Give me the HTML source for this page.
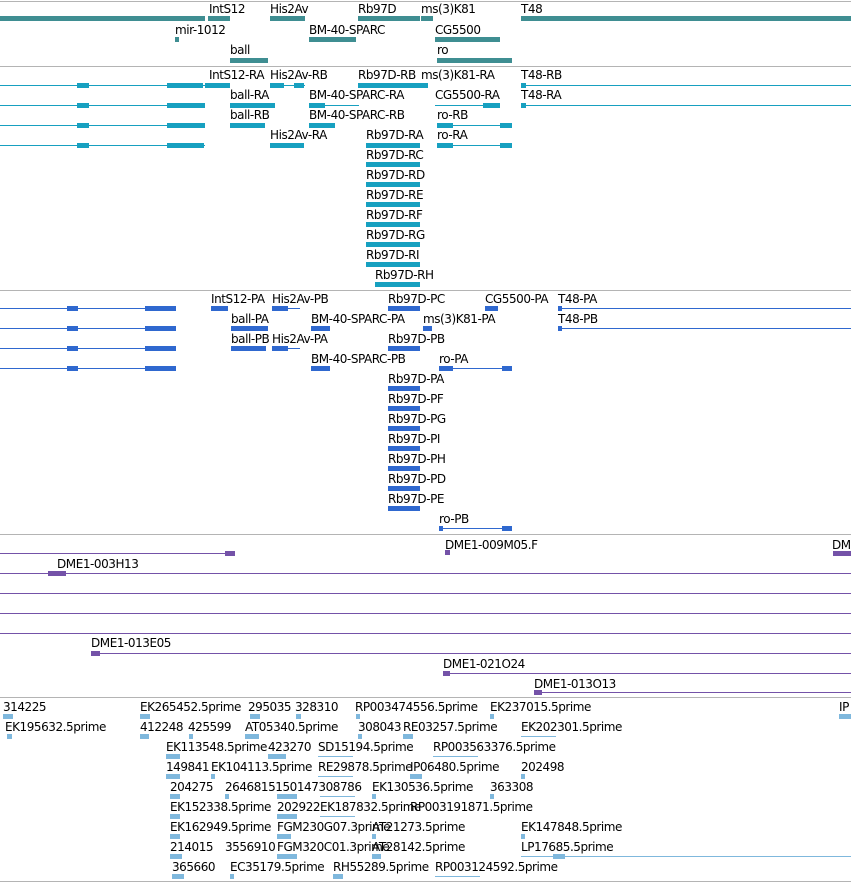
<!DOCTYPE html>
<html><head><meta charset="utf-8"><style>
body{margin:0;width:851px;height:882px;background:#fff;position:relative;overflow:hidden;font-family:"DejaVu Sans","Liberation Sans",sans-serif}
div{position:absolute}
.t{font-size:12px;letter-spacing:-0.45px;line-height:12px;margin-top:1px;color:#000;white-space:nowrap}
.s{left:0;width:851px;height:1px;background:#b4b4b4}
.g{background:#3f8e92;height:5px}
.c{background:#17a0c0}
.p{background:#2f68cf}
.u{background:#7452a8}
.q{background:#7fb8dd}
.h{height:1px}
.b{height:5px}
</style></head><body>
<div class="s" style="top:1px"></div>
<div class="s" style="top:66px"></div>
<div class="s" style="top:290px"></div>
<div class="s" style="top:534px"></div>
<div class="s" style="top:697px"></div>
<div class="s" style="top:881px"></div>

<!-- genes -->
<div class="t" style="left:209px;top:2px">IntS12</div>
<div class="t" style="left:270px;top:2px">His2Av</div>
<div class="t" style="left:358px;top:2px">Rb97D</div>
<div class="t" style="left:421px;top:2px">ms(3)K81</div>
<div class="t" style="left:521px;top:2px">T48</div>
<div class="g" style="left:0;width:205px;top:16px"></div>
<div class="g" style="left:208px;width:22px;top:16px"></div>
<div class="g" style="left:270px;width:35px;top:16px"></div>
<div class="g" style="left:358px;width:62px;top:16px"></div>
<div class="g" style="left:421px;width:12px;top:16px"></div>
<div class="g" style="left:521px;width:330px;top:16px"></div>
<div class="t" style="left:175px;top:23px">mir-1012</div>
<div class="t" style="left:309px;top:23px">BM-40-SPARC</div>
<div class="t" style="left:435px;top:23px">CG5500</div>
<div class="g" style="left:175px;width:4px;top:37px"></div>
<div class="g" style="left:309px;width:47px;top:37px"></div>
<div class="g" style="left:435px;width:65px;top:37px"></div>
<div class="t" style="left:230px;top:43px">ball</div>
<div class="t" style="left:437px;top:43px">ro</div>
<div class="g" style="left:230px;width:38px;top:58px"></div>
<div class="g" style="left:437px;width:75px;top:58px"></div>

<!-- transcripts -->
<div class="t" style="left:209px;top:68px">IntS12-RA</div>
<div class="t" style="left:270px;top:68px">His2Av-RB</div>
<div class="t" style="left:358px;top:68px">Rb97D-RB</div>
<div class="t" style="left:421px;top:68px">ms(3)K81-RA</div>
<div class="t" style="left:521px;top:68px">T48-RB</div>
<div class="c h" style="left:0;width:230px;top:85px"></div>
<div class="c b" style="left:77px;width:12px;top:83px"></div><div class="c b" style="left:167px;width:36px;top:83px"></div><div class="c b" style="left:205px;width:25px;top:83px"></div>
<div class="c h" style="left:270px;width:35px;top:85px"></div><div class="c b" style="left:270px;width:14px;top:83px"></div><div class="c b" style="left:294px;width:10px;top:83px"></div>
<div class="c b" style="left:358px;width:70px;top:83px"></div>
<div class="c h" style="left:521px;width:330px;top:85px"></div><div class="c b" style="left:521px;width:5px;top:83px"></div>

<div class="t" style="left:230px;top:88px">ball-RA</div>
<div class="t" style="left:309px;top:88px">BM-40-SPARC-RA</div>
<div class="t" style="left:435px;top:88px">CG5500-RA</div>
<div class="t" style="left:521px;top:88px">T48-RA</div>
<div class="c h" style="left:0;width:205px;top:105px"></div>
<div class="c b" style="left:77px;width:12px;top:103px"></div><div class="c b" style="left:167px;width:38px;top:103px"></div>
<div class="c b" style="left:230px;width:45px;top:103px"></div>
<div class="c h" style="left:309px;width:50px;top:105px"></div><div class="c b" style="left:309px;width:16px;top:103px"></div>
<div class="c h" style="left:435px;width:65px;top:105px"></div><div class="c b" style="left:483px;width:17px;top:103px"></div>
<div class="c h" style="left:521px;width:330px;top:105px"></div><div class="c b" style="left:521px;width:5px;top:103px"></div>

<div class="t" style="left:230px;top:108px">ball-RB</div>
<div class="t" style="left:309px;top:108px">BM-40-SPARC-RB</div>
<div class="t" style="left:437px;top:108px">ro-RB</div>
<div class="c h" style="left:0;width:205px;top:125px"></div>
<div class="c b" style="left:77px;width:12px;top:123px"></div><div class="c b" style="left:167px;width:38px;top:123px"></div>
<div class="c b" style="left:230px;width:35px;top:123px"></div>
<div class="c b" style="left:309px;width:26px;top:123px"></div>
<div class="c h" style="left:437px;width:75px;top:125px"></div><div class="c b" style="left:437px;width:16px;top:123px"></div><div class="c b" style="left:500px;width:12px;top:123px"></div>

<div class="t" style="left:270px;top:128px">His2Av-RA</div>
<div class="t" style="left:366px;top:128px">Rb97D-RA</div>
<div class="t" style="left:437px;top:128px">ro-RA</div>
<div class="c h" style="left:0;width:205px;top:145px"></div>
<div class="c b" style="left:77px;width:12px;top:143px"></div><div class="c b" style="left:167px;width:37px;top:143px"></div>
<div class="c b" style="left:270px;width:34px;top:143px"></div>
<div class="c b" style="left:366px;width:54px;top:143px"></div>
<div class="c h" style="left:437px;width:75px;top:145px"></div><div class="c b" style="left:437px;width:16px;top:143px"></div><div class="c b" style="left:500px;width:12px;top:143px"></div>

<div class="t" style="left:366px;top:148px">Rb97D-RC</div><div class="c b" style="left:366px;width:54px;top:162px"></div>
<div class="t" style="left:366px;top:168px">Rb97D-RD</div><div class="c b" style="left:366px;width:54px;top:182px"></div>
<div class="t" style="left:366px;top:188px">Rb97D-RE</div><div class="c b" style="left:366px;width:54px;top:202px"></div>
<div class="t" style="left:366px;top:208px">Rb97D-RF</div><div class="c b" style="left:366px;width:54px;top:222px"></div>
<div class="t" style="left:366px;top:228px">Rb97D-RG</div><div class="c b" style="left:366px;width:54px;top:242px"></div>
<div class="t" style="left:366px;top:248px">Rb97D-RI</div><div class="c b" style="left:366px;width:54px;top:262px"></div>
<div class="t" style="left:375px;top:268px">Rb97D-RH</div><div class="c b" style="left:375px;width:45px;top:282px"></div>

<!-- proteins -->
<div class="t" style="left:211px;top:292px">IntS12-PA</div>
<div class="t" style="left:272px;top:292px">His2Av-PB</div>
<div class="t" style="left:388px;top:292px">Rb97D-PC</div>
<div class="t" style="left:485px;top:292px">CG5500-PA</div>
<div class="t" style="left:558px;top:292px">T48-PA</div>
<div class="p h" style="left:0;width:176px;top:308px"></div>
<div class="p b" style="left:67px;width:11px;top:306px"></div><div class="p b" style="left:145px;width:31px;top:306px"></div>
<div class="p b" style="left:211px;width:17px;top:306px"></div>
<div class="p h" style="left:272px;width:28px;top:308px"></div><div class="p b" style="left:272px;width:16px;top:306px"></div>
<div class="p b" style="left:388px;width:32px;top:306px"></div>
<div class="p b" style="left:485px;width:13px;top:306px"></div>
<div class="p h" style="left:558px;width:293px;top:308px"></div><div class="p b" style="left:558px;width:4px;top:306px"></div>

<div class="t" style="left:231px;top:312px">ball-PA</div>
<div class="t" style="left:311px;top:312px">BM-40-SPARC-PA</div>
<div class="t" style="left:423px;top:312px">ms(3)K81-PA</div>
<div class="t" style="left:558px;top:312px">T48-PB</div>
<div class="p h" style="left:0;width:176px;top:328px"></div>
<div class="p b" style="left:67px;width:11px;top:326px"></div><div class="p b" style="left:145px;width:31px;top:326px"></div>
<div class="p b" style="left:231px;width:37px;top:326px"></div>
<div class="p b" style="left:311px;width:19px;top:326px"></div>
<div class="p b" style="left:423px;width:9px;top:326px"></div>
<div class="p h" style="left:558px;width:293px;top:328px"></div><div class="p b" style="left:558px;width:4px;top:326px"></div>

<div class="t" style="left:231px;top:332px">ball-PB</div>
<div class="t" style="left:272px;top:332px">His2Av-PA</div>
<div class="t" style="left:388px;top:332px">Rb97D-PB</div>
<div class="p h" style="left:0;width:176px;top:348px"></div>
<div class="p b" style="left:67px;width:11px;top:346px"></div><div class="p b" style="left:145px;width:31px;top:346px"></div>
<div class="p b" style="left:231px;width:35px;top:346px"></div>
<div class="p h" style="left:272px;width:28px;top:348px"></div><div class="p b" style="left:272px;width:16px;top:346px"></div>
<div class="p b" style="left:388px;width:32px;top:346px"></div>

<div class="t" style="left:311px;top:352px">BM-40-SPARC-PB</div>
<div class="t" style="left:439px;top:352px">ro-PA</div>
<div class="p h" style="left:0;width:176px;top:368px"></div>
<div class="p b" style="left:67px;width:11px;top:366px"></div><div class="p b" style="left:145px;width:31px;top:366px"></div>
<div class="p b" style="left:311px;width:19px;top:366px"></div>
<div class="p h" style="left:439px;width:73px;top:368px"></div><div class="p b" style="left:439px;width:14px;top:366px"></div><div class="p b" style="left:502px;width:10px;top:366px"></div>

<div class="t" style="left:388px;top:372px">Rb97D-PA</div><div class="p b" style="left:388px;width:32px;top:386px"></div>
<div class="t" style="left:388px;top:392px">Rb97D-PF</div><div class="p b" style="left:388px;width:32px;top:406px"></div>
<div class="t" style="left:388px;top:412px">Rb97D-PG</div><div class="p b" style="left:388px;width:32px;top:426px"></div>
<div class="t" style="left:388px;top:432px">Rb97D-PI</div><div class="p b" style="left:388px;width:32px;top:446px"></div>
<div class="t" style="left:388px;top:452px">Rb97D-PH</div><div class="p b" style="left:388px;width:32px;top:466px"></div>
<div class="t" style="left:388px;top:472px">Rb97D-PD</div><div class="p b" style="left:388px;width:32px;top:486px"></div>
<div class="t" style="left:388px;top:492px">Rb97D-PE</div><div class="p b" style="left:388px;width:32px;top:506px"></div>
<div class="t" style="left:439px;top:512px">ro-PB</div>
<div class="p h" style="left:439px;width:73px;top:528px"></div><div class="p b" style="left:439px;width:4px;top:526px"></div><div class="p b" style="left:502px;width:10px;top:526px"></div>

<!-- purple -->
<div class="t" style="left:445px;top:538px">DME1-009M05.F</div>
<div class="t" style="left:832px;top:538px">DM</div>
<div class="u h" style="left:0;width:235px;top:553px"></div><div class="u b" style="left:225px;width:10px;top:551px"></div>
<div class="u b" style="left:445px;width:5px;top:550px"></div>
<div class="u b" style="left:833px;width:18px;top:551px"></div>
<div class="t" style="left:57px;top:557px">DME1-003H13</div>
<div class="u h" style="left:0;width:851px;top:573px"></div><div class="u b" style="left:48px;width:18px;top:571px"></div>
<div class="u h" style="left:0;width:851px;top:593px"></div>
<div class="u h" style="left:0;width:851px;top:613px"></div>
<div class="u h" style="left:0;width:851px;top:633px"></div>
<div class="t" style="left:91px;top:636px">DME1-013E05</div>
<div class="u h" style="left:91px;width:760px;top:653px"></div><div class="u b" style="left:91px;width:9px;top:651px"></div>
<div class="t" style="left:443px;top:657px">DME1-021O24</div>
<div class="u h" style="left:443px;width:408px;top:673px"></div><div class="u b" style="left:443px;width:7px;top:671px"></div>
<div class="t" style="left:534px;top:677px">DME1-013O13</div>
<div class="u h" style="left:534px;width:317px;top:692px"></div><div class="u b" style="left:534px;width:8px;top:690px"></div>

<!-- ESTs -->
<div class="t" style="left:3px;top:700px">314225</div>
<div class="t" style="left:140px;top:700px">EK265452.5prime</div>
<div class="t" style="left:248px;top:700px">295035</div>
<div class="t" style="left:295px;top:700px">328310</div>
<div class="t" style="left:355px;top:700px">RP003474556.5prime</div>
<div class="t" style="left:490px;top:700px">EK237015.5prime</div>
<div class="t" style="left:839px;top:700px">IP</div>
<div class="q b" style="left:3px;width:10px;top:714px"></div><div class="q b" style="left:140px;width:10px;top:714px"></div><div class="q b" style="left:250px;width:10px;top:714px"></div><div class="q b" style="left:296px;width:5px;top:714px"></div><div class="q b" style="left:356px;width:4px;top:714px"></div><div class="q b" style="left:490px;width:4px;top:714px"></div><div class="q b" style="left:839px;width:12px;top:714px"></div>

<div class="t" style="left:5px;top:720px">EK195632.5prime</div>
<div class="t" style="left:140px;top:720px">412248</div>
<div class="t" style="left:188px;top:720px">425599</div>
<div class="t" style="left:245px;top:720px">AT05340.5prime</div>
<div class="t" style="left:358px;top:720px">308043</div>
<div class="t" style="left:403px;top:720px">RE03257.5prime</div>
<div class="t" style="left:521px;top:720px">EK202301.5prime</div>
<div class="q b" style="left:7px;width:5px;top:734px"></div><div class="q b" style="left:140px;width:9px;top:734px"></div><div class="q b" style="left:189px;width:4px;top:734px"></div><div class="q b" style="left:245px;width:14px;top:734px"></div><div class="q b" style="left:358px;width:4px;top:734px"></div><div class="q b" style="left:403px;width:10px;top:734px"></div><div class="q h" style="left:521px;width:35px;top:736px"></div>

<div class="t" style="left:166px;top:740px">EK113548.5prime</div>
<div class="t" style="left:268px;top:740px">423270</div>
<div class="t" style="left:318px;top:740px">SD15194.5prime</div>
<div class="t" style="left:433px;top:740px">RP003563376.5prime</div>
<div class="q b" style="left:166px;width:14px;top:754px"></div><div class="q b" style="left:268px;width:18px;top:754px"></div><div class="q h" style="left:318px;width:35px;top:756px"></div><div class="q h" style="left:433px;width:45px;top:756px"></div>

<div class="t" style="left:166px;top:760px">149841</div>
<div class="t" style="left:211px;top:760px">EK104113.5prime</div>
<div class="t" style="left:318px;top:760px">RE29878.5prime</div>
<div class="t" style="left:410px;top:760px">IP06480.5prime</div>
<div class="t" style="left:521px;top:760px">202498</div>
<div class="q b" style="left:166px;width:14px;top:774px"></div><div class="q b" style="left:211px;width:4px;top:774px"></div><div class="q h" style="left:318px;width:35px;top:776px"></div><div class="q b" style="left:410px;width:12px;top:774px"></div><div class="q b" style="left:521px;width:4px;top:774px"></div>

<div class="t" style="left:170px;top:780px">204275</div>
<div class="t" style="left:225px;top:780px">2646815150147308786</div>
<div class="t" style="left:372px;top:780px">EK130536.5prime</div>
<div class="t" style="left:490px;top:780px">363308</div>
<div class="q b" style="left:170px;width:10px;top:794px"></div><div class="q b" style="left:225px;width:4px;top:794px"></div><div class="q b" style="left:277px;width:20px;top:794px"></div><div class="q h" style="left:320px;width:35px;top:796px"></div><div class="q b" style="left:372px;width:4px;top:794px"></div><div class="q b" style="left:490px;width:4px;top:794px"></div>

<div class="t" style="left:170px;top:800px">EK152338.5prime</div>
<div class="t" style="left:277px;top:800px">202922</div>
<div class="t" style="left:320px;top:800px">EK187832.5prime</div>
<div class="t" style="left:410px;top:800px">RP003191871.5prime</div>
<div class="q b" style="left:170px;width:10px;top:814px"></div><div class="q b" style="left:277px;width:20px;top:814px"></div><div class="q h" style="left:320px;width:35px;top:816px"></div>

<div class="t" style="left:170px;top:820px">EK162949.5prime</div>
<div class="t" style="left:277px;top:820px">FGM230G07.3prime</div>
<div class="t" style="left:372px;top:820px">AT21273.5prime</div>
<div class="t" style="left:521px;top:820px">EK147848.5prime</div>
<div class="q b" style="left:170px;width:10px;top:834px"></div><div class="q b" style="left:277px;width:14px;top:834px"></div><div class="q b" style="left:372px;width:4px;top:834px"></div><div class="q b" style="left:521px;width:4px;top:834px"></div>

<div class="t" style="left:170px;top:840px">214015</div>
<div class="t" style="left:225px;top:840px">3556910</div>
<div class="t" style="left:277px;top:840px">FGM320C01.3prime</div>
<div class="t" style="left:372px;top:840px">AT28142.5prime</div>
<div class="t" style="left:521px;top:840px">LP17685.5prime</div>
<div class="q b" style="left:170px;width:12px;top:854px"></div><div class="q b" style="left:277px;width:20px;top:854px"></div><div class="q b" style="left:372px;width:9px;top:854px"></div><div class="q h" style="left:521px;width:330px;top:856px"></div><div class="q b" style="left:553px;width:12px;top:854px"></div>

<div class="t" style="left:172px;top:860px">365660</div>
<div class="t" style="left:230px;top:860px">EC35179.5prime</div>
<div class="t" style="left:333px;top:860px">RH55289.5prime</div>
<div class="t" style="left:435px;top:860px">RP003124592.5prime</div>
<div class="q b" style="left:172px;width:12px;top:874px"></div><div class="q b" style="left:230px;width:4px;top:874px"></div><div class="q b" style="left:333px;width:10px;top:874px"></div><div class="q h" style="left:435px;width:45px;top:876px"></div>
</body></html>
